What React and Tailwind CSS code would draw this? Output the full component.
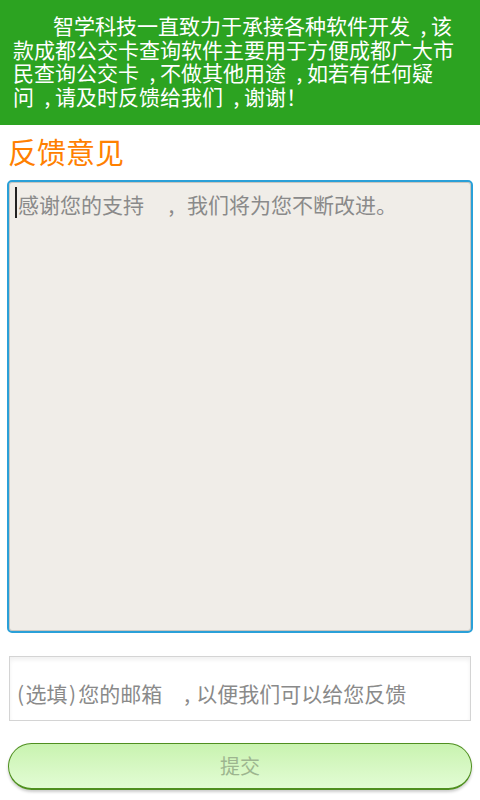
function C({ w }) {
  return <span className={`inline-block text-center indent-0 ${w}`}>,</span>;
}

function G({ c }) {
  return (
    <span className="whitespace-nowrap">
      {c}
      <C w="w-[21px] pl-[6px]" />
    </span>
  );
}

export default function App() {
  const font = { fontFamily: '"Noto Sans CJK SC", "Noto Sans", sans-serif' };
  return (
    <div className="w-[480px] h-[800px] bg-white flex flex-col overflow-hidden" style={font}>
      <div className="bg-[#2ca321] h-[125px] px-[13px] pt-[14px] text-white text-[21px] leading-[23.5px]">
        <p className="indent-[40px] m-0">
          智学科技一直致力于承接各种软件开<G c="发" />该款成都公交卡查询软件主要用于方便成都广大市民查询公交<G c="卡" />不做其他用<G c="途" />如若有任何疑<G c="问" />请及时反馈给我<G c="们" />谢谢！
        </p>
      </div>
      <div className="px-[8px] pt-[8px] text-[#ff8000] text-[29px] leading-[36px]">反馈意见</div>
      <div className="mt-[11px] mx-[7px] h-[453px] rounded-[5px] border-2 border-[#2aa0d8] bg-[#f0ede8] shadow-[inset_0_0_0_1px_#c9c6c0] flex">
        <div className="flex items-start pl-[6px] pt-[5px] text-[21px] leading-[28px] text-[#8a8a8a] whitespace-nowrap">
          <span className="w-[2px] h-[31px] bg-[#222] mr-[1px] shrink-0"></span>
          <span className="pt-[3px]">感谢您的支持<C w="w-[43px] pl-[12px]" />我们将为您不断改进。</span>
        </div>
      </div>
      <div className="mt-[23px] mx-[9px] h-[65px] border border-[#d4d4d4] bg-white shadow-[inset_0_3px_4px_rgba(0,0,0,0.06)] flex items-center pl-[6px] pt-[10px] text-[21px] text-[#8a8a8a] whitespace-nowrap">
        <span>
          <span className="pl-[1px] pr-[1.5px]">(</span>选填<span className="pl-[1.5px] pr-[2px]">)</span>您的邮箱<C w="w-[34px] pl-[16px]" />以便我们可以给您反馈
        </span>
      </div>
      <div className="mt-[22px] mx-[8px] h-[47px] rounded-full border border-[#4f8f20] border-b-2 bg-gradient-to-b from-[#c9f3b0] to-[#e2fcd4] shadow-[0_2px_3px_rgba(0,0,0,0.2)] flex items-center justify-center text-[20px] text-[#9db58f]">
        提交
      </div>
    </div>
  );
}
